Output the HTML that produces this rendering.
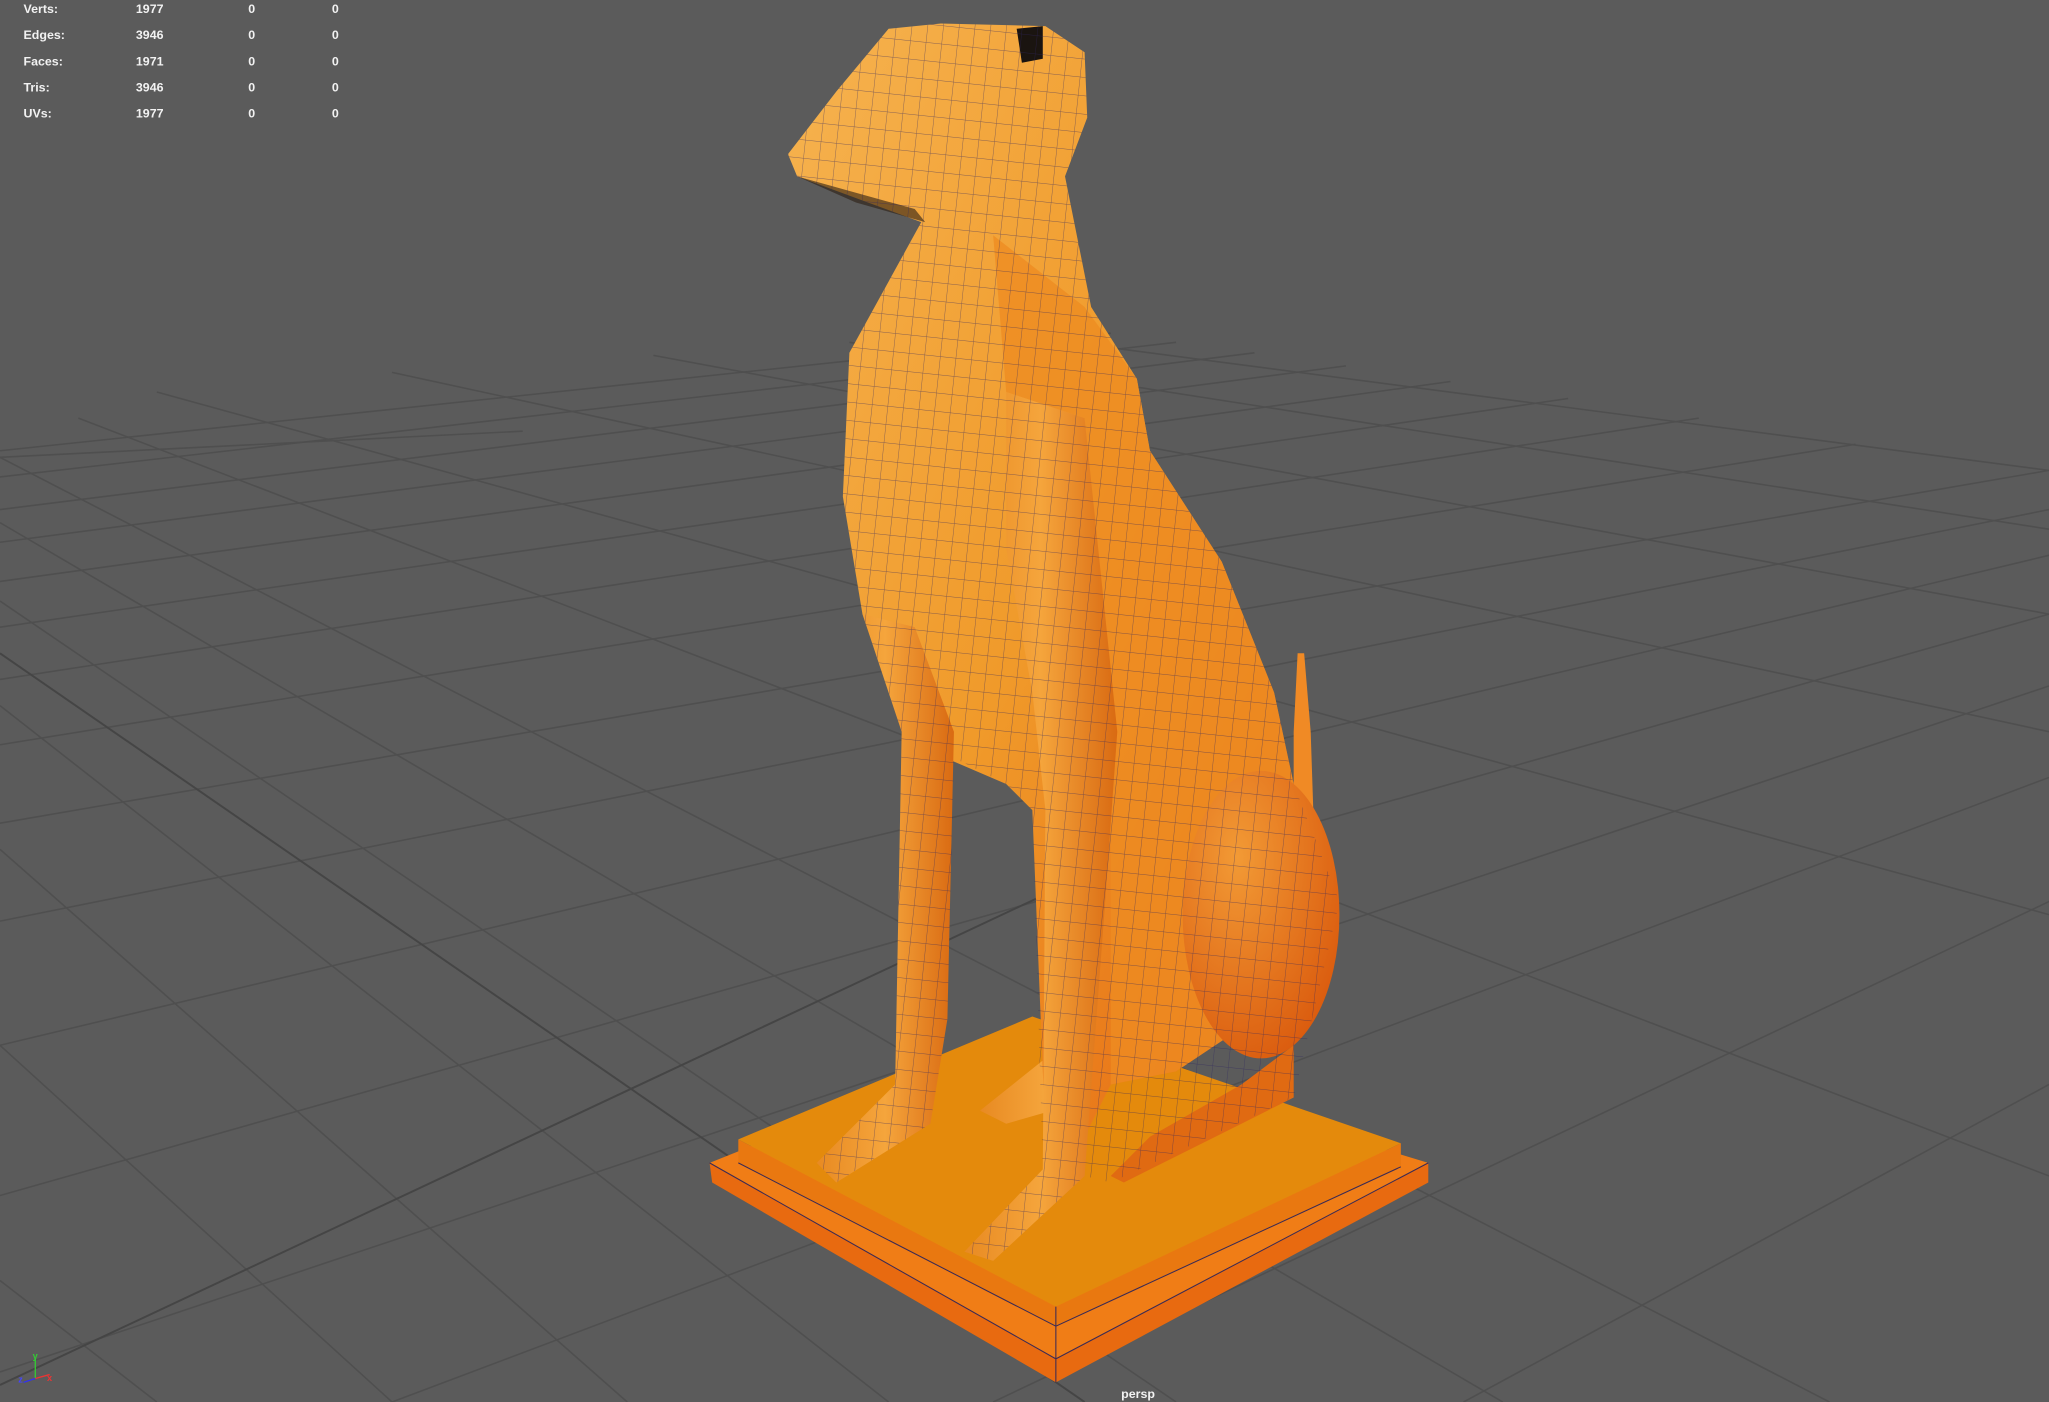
<!DOCTYPE html>
<html><head><meta charset="utf-8"><style>
html,body{margin:0;padding:0;background:#5b5b5b;overflow:hidden}
svg{display:block}
text{font-family:"Liberation Sans",sans-serif;font-weight:bold;fill:#f2f2f2}
</style></head><body>
<svg width="2049" height="1402" viewBox="0 0 1568 1073" preserveAspectRatio="none">
<defs>
<linearGradient id="body" x1="0" y1="0" x2="1" y2="1">
<stop offset="0" stop-color="#f6b350"/><stop offset="0.5" stop-color="#f09a2a"/><stop offset="1" stop-color="#e4620f"/>
</linearGradient>
<linearGradient id="leg" x1="0" y1="0" x2="1" y2="0">
<stop offset="0" stop-color="#e88a22"/><stop offset="0.5" stop-color="#f5a53c"/><stop offset="1" stop-color="#d96a12"/>
</linearGradient>
<radialGradient id="hip" cx="0.35" cy="0.3" r="0.8">
<stop offset="0" stop-color="#f29a35"/><stop offset="1" stop-color="#d9580c"/>
</radialGradient>
<pattern id="wire" width="12" height="14" patternUnits="userSpaceOnUse" patternTransform="rotate(6)">
<path d="M0 0H12M0 0V14" stroke="#2e2560" stroke-width="0.7" fill="none"/>
</pattern>
<clipPath id="c"><path d="M603 118L640 70L680 22L720 18L800 20L830 40L832 90L815 135L835 235L870 290L880 345L935 430L975 530L990 600L1025 690L990 840L850 905L830 900L760 965L738 958L798 895L790 620L770 600L730 580L725 780L712 860L640 905L625 890L685 830L690 560L660 470L645 380L650 270L705 170L610 135Z"/></clipPath>
</defs>
<rect width="1568" height="1073" fill="#5b5b5b"/>
<g stroke="#4f4f4f" stroke-width="1.2" fill="none">
<path d="M0 345L850 255M0 365L900 262M0 390L960 270M0 415L1030 280M0 445L1110 292M0 480L1200 305M0 520L1300 320M0 570L1420 340M0 630L1568 360M0 705L1568 390M0 800L1568 425M0 915L1568 470M0 1050L1568 525M300 1073L1568 595M760 1073L1568 690M1120 1073L1568 830"/>
<path d="M0 350L400 330M120 300L1568 700M300 285L1568 560M500 272L1568 470M650 262L1568 405M780 257L1568 360M60 320L1568 900M0 350L1400 1073M0 400L1150 1073M0 460L900 1073M0 540L680 1073M0 650L480 1073M0 800L300 1073M0 980L120 1073"/>
</g>
<path d="M0 500L830 1073M0 1060L980 600" stroke="#454545" stroke-width="1.5" fill="none"/>
<!-- base -->
<polygon points="543,890 808,1040 1093,890 1093,905 808,1058 545,905" fill="#e86a10"/>
<polygon points="543,890 780,795 1093,890 808,1040" fill="#f07d16"/>
<polygon points="565,872 565,890 808,1015 1072,893 1072,875 808,1000" fill="#e97810"/>
<polygon points="565,872 790,778 1072,875 808,1000" fill="#e48a0c"/>
<path d="M543 890L808 1040L1093 890M565 890L808 1015L1072 893M808 1000V1058" stroke="#3a2a55" stroke-width="0.8" fill="none"/>
<path d="M750 850L800 810L850 800L840 840L770 860Z" fill="url(#leg)"/>
<path d="M993 500L998 500L1003 560L1005 620L990 620L990 560Z" fill="#f08a25"/>
<!-- head+neck+body -->
<path d="M603 118L640 70L680 22L720 18L800 20L830 40L832 90L815 135L835 235L870 290L880 345L935 430L975 530L990 600L1005 680L960 780L900 820L850 830L830 870L800 870L790 620L770 600L700 570L660 470L645 380L650 270L705 170L610 135Z" fill="url(#body)"/>
<path d="M760 180L830 235L870 290L880 345L935 430L975 530L990 600L1005 680L960 780L900 820L850 830L850 560L830 320L770 300Z" fill="#ee8c22" opacity="0.8"/>
<ellipse cx="965" cy="700" rx="60" ry="110" fill="url(#hip)"/>
<path d="M990 800L950 830L880 870L850 900L860 905L950 860L990 840Z" fill="#e06a12"/>
<path d="M778 22L798 20L798 45L782 48Z" fill="#1a1410"/>
<path d="M610 135L700 160L708 170L655 155Z" fill="#2b1e12" opacity="0.6"/>
<path d="M660 470L700 480L730 560L725 780L712 860L640 905L625 890L685 830L690 560Z" fill="url(#leg)"/>
<path d="M770 300L830 320L855 560L845 700L830 900L760 965L738 958L798 895L800 620L790 530L770 420Z" fill="url(#leg)"/>
<rect x="595" y="10" width="440" height="970" fill="url(#wire)" opacity="0.55" clip-path="url(#c)"/>
<g font-size="9.5">
<text x="18" y="10">Verts:</text><text x="104" y="10">1977</text><text x="190" y="10">0</text><text x="254" y="10">0</text>
<text x="18" y="30">Edges:</text><text x="104" y="30">3946</text><text x="190" y="30">0</text><text x="254" y="30">0</text>
<text x="18" y="50">Faces:</text><text x="104" y="50">1971</text><text x="190" y="50">0</text><text x="254" y="50">0</text>
<text x="18" y="70">Tris:</text><text x="104" y="70">3946</text><text x="190" y="70">0</text><text x="254" y="70">0</text>
<text x="18" y="90">UVs:</text><text x="104" y="90">1977</text><text x="190" y="90">0</text><text x="254" y="90">0</text>
<text x="858" y="1070">persp</text>
</g>
<g font-size="7">
<path d="M27 1055V1040" stroke="#3c3" stroke-width="1"/><path d="M27 1055L38 1052" stroke="#e33" stroke-width="1"/><path d="M27 1055L18 1058" stroke="#33e" stroke-width="1"/>
<text x="25" y="1040" style="fill:#3c3">y</text><text x="36" y="1057" style="fill:#e33">x</text><text x="14" y="1058" style="fill:#44f">z</text>
</g>
</svg>
</body></html>
